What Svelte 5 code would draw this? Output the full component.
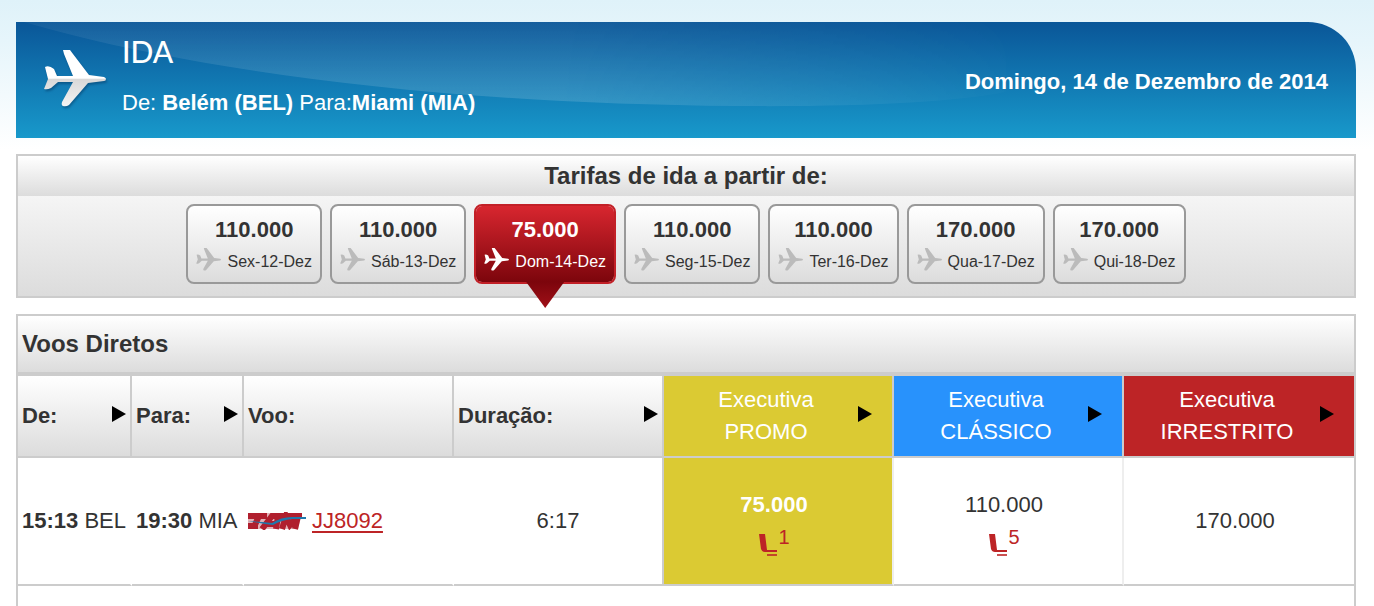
<script lang="ts">
	type Fare = { price: string; day: string; selected?: boolean };

	const fares: Fare[] = [
		{ price: '110.000', day: 'Sex-12-Dez' },
		{ price: '110.000', day: 'Sáb-13-Dez' },
		{ price: '75.000', day: 'Dom-14-Dez', selected: true },
		{ price: '110.000', day: 'Seg-15-Dez' },
		{ price: '110.000', day: 'Ter-16-Dez' },
		{ price: '170.000', day: 'Qua-17-Dez' },
		{ price: '170.000', day: 'Qui-18-Dez' }
	];

	const columns = [
		{ label: 'De:', sortable: true },
		{ label: 'Para:', sortable: true },
		{ label: 'Voo:', sortable: false },
		{ label: 'Duração:', sortable: true }
	];

	const classes = [
		{ name: 'PROMO', color: 'promo' },
		{ name: 'CLÁSSICO', color: 'classico' },
		{ name: 'IRRESTRITO', color: 'irrestrito' }
	];

	const flights = [
		{
			departure: '15:13',
			from: 'BEL',
			arrival: '19:30',
			to: 'MIA',
			code: 'JJ8092',
			duration: '6:17',
			prices: [
				{ value: '75.000', seats: 1, best: true },
				{ value: '110.000', seats: 5, best: false },
				{ value: '170.000', seats: 0, best: false }
			]
		}
	];

	const plane =
		'M19 0H26L29 4L45 25L60 27Q62 28 62 29Q62 31 60 31L44 33L25 55Q22 57 19 56Q17 55 18 52L29 32L14 32L7 38Q3 40 0 39L4 29L1 17Q5 15 10 19L13 26L29 26L20 4Z';
</script>

<main>
	<header>
		<svg class="gloss" viewBox="0 0 1340 116" preserveAspectRatio="none" aria-hidden="true">
			<defs>
				<linearGradient id="shine" x1="0" x2="0" y1="0" y2="1">
					<stop offset="0" stop-color="#fff" stop-opacity="0.05" />
					<stop offset="1" stop-color="#fff" stop-opacity="0.15" />
				</linearGradient>
				<linearGradient id="fade" x1="0" x2="1" y1="0" y2="0">
					<stop offset="0.55" stop-color="#fff" />
					<stop offset="1" stop-color="#fff" stop-opacity="0.1" />
				</linearGradient>
				<mask id="edge">
					<rect width="990" height="116" fill="url(#fade)" />
				</mask>
			</defs>
			<path
				d="M8 0C150 42 400 82 720 84C850 85 940 80 990 70V40Q990 14 964 0Z"
				fill="url(#shine)"
				mask="url(#edge)"
			/>
		</svg>
		<svg class="plane" viewBox="0 0 64 60" aria-hidden="true">
			<defs>
				<linearGradient id="hull" x1="0" x2="0" y1="0" y2="1">
					<stop offset="0.5" stop-color="#fff" />
					<stop offset="0.52" stop-color="#d8d8d8" />
					<stop offset="1" stop-color="#f4f4f4" />
				</linearGradient>
			</defs>
			<path d={plane} fill="url(#hull)" />
		</svg>
		<div class="route">
			<h1>IDA</h1>
			<p>De: <strong>Belém (BEL)</strong> Para:<strong>Miami (MIA)</strong></p>
		</div>
		<p class="date">Domingo, 14 de Dezembro de 2014</p>
	</header>

	<section class="fares">
		<h2>Tarifas de ida a partir de:</h2>
		<div class="days">
			{#each fares as fare (fare.day)}
				<button type="button" class:selected={fare.selected} aria-pressed={!!fare.selected}>
					<strong>{fare.price}</strong>
					<span class="day">
						<svg viewBox="0 0 64 60" aria-hidden="true"><path d={plane} /></svg>
						{fare.day}
					</span>
				</button>
			{/each}
		</div>
	</section>

	<section class="flights">
		<h2>Voos Diretos</h2>
		<table>
			<colgroup>
				<col class="from" />
				<col class="to" />
				<col class="flight" />
				<col class="duration" />
				<col span="3" />
			</colgroup>
			<thead>
				<tr>
					{#each columns as column}
						<th scope="col">
							<div class="label">
								{column.label}
								{#if column.sortable}<span class="arrow"></span>{/if}
							</div>
						</th>
					{/each}
					{#each classes as cabin}
						<th scope="col" class="cabin {cabin.color}">
							<div class="label">
								<span class="name">Executiva<br />{cabin.name}</span>
								<span class="arrow"></span>
							</div>
						</th>
					{/each}
				</tr>
			</thead>
			<tbody>
				{#each flights as flight}
					<tr>
						<td><strong>{flight.departure}</strong> {flight.from}</td>
						<td><strong>{flight.arrival}</strong> {flight.to}</td>
						<td>
							<div class="number">
								<svg class="airline" viewBox="0 0 58 18" role="img" aria-label="TAM">
									<path d="M0 1H54L50 17H0Z" fill="#b01f2e" opacity="0.35" />
									<g fill="none" stroke="#b01f2e" stroke-width="6">
										<path d="M0 4H19M11 4L6 15M0 14H10" />
										<path d="M14 17L24 4H30L28 17M19 12H29" />
										<path d="M34 17L38 4L42 13L50 4L47 17" />
										<path d="M30 4H54" />
									</g>
									<path d="M0 9L14 10L24 11Q33 5 44 5H58V7H44Q34 8 25 13L17 12Z" fill="#1f78ac" />
								</svg>
								<a href="#{flight.code}">{flight.code}</a>
							</div>
						</td>
						<td class="time">{flight.duration}</td>
						{#each flight.prices as price}
							<td class="price" class:best={price.best}>
								{price.value}
								{#if price.seats}
									<div class="seats">
										<svg viewBox="0 0 20 26" aria-hidden="true">
											<path d="M1 1H7L9 17H19V19H7Q4 19 3 16Z" />
											<path d="M9 21H19V23H9Z" opacity="0.8" />
										</svg>
										<span>{price.seats}</span>
									</div>
								{/if}
							</td>
						{/each}
					</tr>
				{/each}
				<tr class="next"><td colspan="7"></td></tr>
			</tbody>
		</table>
	</section>
</main>

<style>
	:global(body) {
		margin: 0;
		background: #fff;
	}

	main {
		display: flex;
		flex-direction: column;
		gap: 16px;
		padding: 22px 18px 0 16px;
		color: #333;
		font: 22px/32px 'Liberation Sans', Arial, sans-serif;
		background: linear-gradient(#dff2f9, #e6f5fb 40px, #fff 150px);
	}

	h1,
	h2,
	p {
		margin: 0;
	}

	header {
		position: relative;
		display: flex;
		align-items: center;
		gap: 14px;
		box-sizing: border-box;
		min-height: 116px;
		padding: 0 28px;
		overflow: hidden;
		color: #fff;
		border-top-right-radius: 48px;
		background: linear-gradient(#0a5698, #1899cb);
	}

	.gloss {
		position: absolute;
		inset: 0;
		width: 100%;
		height: 100%;
	}

	.plane {
		width: 64px;
		height: 60px;
		filter: drop-shadow(1px 2px 1px rgba(0, 40, 80, 0.4));
	}

	.route {
		position: relative;
		flex: 1;
		padding-bottom: 6px;
	}

	h1 {
		padding-bottom: 20px;
		font: 500 30px/32px Lato, sans-serif;
	}

	.date {
		position: relative;
		padding-top: 4px;
		font-weight: bold;
	}

	.fares {
		border: 2px solid #ccc;
	}

	.fares h2 {
		font-size: 24px;
		line-height: 40px;
		text-align: center;
		background: linear-gradient(#fff, #dcdcdc);
	}

	.days {
		display: flex;
		justify-content: center;
		gap: 8px;
		padding: 8px 0 12px;
		background: linear-gradient(#f5f5f5, #dcdcdc);
	}

	button {
		position: relative;
		box-sizing: border-box;
		height: 80px;
		padding: 8px 8px 4px;
		color: #333;
		font: 22px/32px 'Liberation Sans', Arial, sans-serif;
		border: 2px solid #999;
		border-radius: 8px;
		background: linear-gradient(#fff, #dcdcdc) padding-box;
	}

	button strong {
		display: block;
	}

	.day {
		display: flex;
		align-items: center;
		gap: 5px;
		font-size: 16px;
	}

	.day svg {
		width: 26px;
		height: 24px;
		margin-bottom: 4px;
		fill: #bbb;
	}

	button.selected {
		color: #fff;
		border-color: #c22027;
		background: linear-gradient(#d8262f, #7c050c) padding-box;
	}

	.selected .day svg {
		fill: #fff;
	}

	.selected::after {
		content: '';
		position: absolute;
		top: 76px;
		left: calc(50% - 19px);
		width: 38px;
		height: 26px;
		background: linear-gradient(#7c050c, #a01018);
		clip-path: polygon(0 0, 100% 0, 50% 100%);
	}

	.flights {
		border: 2px solid #ccc;
		border-bottom: 0;
	}

	.flights h2 {
		padding: 0 4px;
		font-size: 24px;
		line-height: 56px;
		border-bottom: 4px solid #ccc;
		background: linear-gradient(#fff, #dcdcdc);
	}

	table {
		width: 100%;
		table-layout: fixed;
		border-spacing: 0;
	}

	.from {
		width: 114px;
	}

	.to {
		width: 112px;
	}

	.flight,
	.duration {
		width: 210px;
	}

	th,
	td {
		box-sizing: border-box;
		padding: 0 4px;
		text-align: left;
		white-space: nowrap;
		border-right: 2px solid #fff;
		border-bottom: 2px solid #ccc;
	}

	th {
		height: 82px;
		border-right-color: #ccc;
		background: linear-gradient(#fff, #dcdcdc) padding-box;
	}

	th:last-child,
	td:last-child {
		border-right: 0;
	}

	.label {
		display: flex;
		align-items: center;
		justify-content: space-between;
	}

	.arrow {
		margin-bottom: 4px;
		border: solid transparent;
		border-width: 8px 0 8px 14px;
		border-left-color: #000;
	}

	.cabin {
		padding: 0 20px 0 10px;
		color: #fff;
		font-weight: normal;
		text-align: center;
	}

	.cabin .name {
		flex: 1;
	}

	.promo {
		background: #dbca33;
	}

	.classico {
		background: #2892fc;
	}

	.irrestrito {
		background: #bd2426;
	}

	td {
		height: 128px;
	}

	.number {
		display: flex;
		align-items: center;
		gap: 6px;
	}

	.airline {
		width: 58px;
		height: 18px;
	}

	a {
		color: #bd2426;
		text-underline-offset: 3px;
	}

	.time {
		text-align: center;
		border-right-color: #ccc;
	}

	.price {
		padding-right: 12px;
		text-align: center;
		border-right-color: #eee;
	}

	.best {
		color: #fff;
		font-weight: bold;
		background: #dbca33;
	}

	.seats {
		display: flex;
		justify-content: center;
		color: #bd2426;
		font-size: 20px;
		font-weight: normal;
	}

	.seats svg {
		width: 20px;
		height: 26px;
		margin: 12px 0 -6px;
		fill: #bd2426;
	}

	.next td {
		height: 20px;
		border: 0;
	}
</style>
